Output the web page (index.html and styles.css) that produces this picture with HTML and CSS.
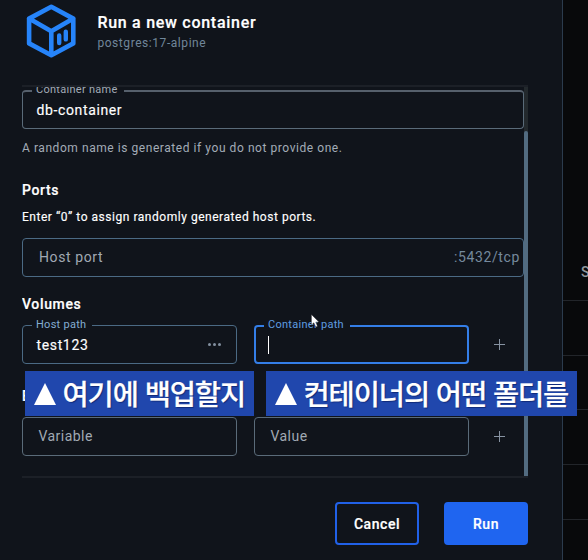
FILE: index.html
```html
<!DOCTYPE html>
<html lang="en">
<head>
<meta charset="utf-8">
<title>Run a new container</title>
<link rel="stylesheet" href="styles.css">
</head>
<body>
<div class="app">
  <main class="dialog">
    <header class="header">
      <svg class="logo" width="50" height="54" viewBox="0 0 50 54" fill="none" stroke="#2684fa" stroke-width="4.6" stroke-linejoin="round" stroke-linecap="round">
        <path d="M25.3 2.8 47.3 14.6V39.4L25.3 51.2 3.1 39.4V14.6ZM3.1 14.6 25.3 27.2 47.3 14.6M25.3 27.2V51.2"/>
        <path d="M33.2 31.5V39M39.8 27.8V35.4" stroke-width="4.4"/>
      </svg>
      <div class="heading">
        <h1 class="title">Run a new container</h1>
        <p class="image">postgres:17-alpine</p>
      </div>
    </header>
    <section class="scroll">
      <div class="form">
        <div class="field name-field">
          <div class="legend legend-clip"><span class="l-name">Container name</span></div>
          <span class="value v-name">db-container</span>
        </div>
        <p class="hint">A random name is generated if you do not provide one.</p>
        <h2 class="section">Ports</h2>
        <p class="note">Enter “0” to assign randomly generated host ports.</p>
        <div class="field port-field">
          <span class="placeholder p-port">Host port</span>
          <span class="suffix">:5432/tcp</span>
        </div>
        <h2 class="section volumes">Volumes</h2>
        <div class="row">
          <div class="field blue-line">
            <div class="legend"><span class="l-host">Host path</span></div>
            <span class="value v-test">test123</span>
            <span class="dots"><i></i><i></i><i></i></span>
          </div>
          <div class="field focused">
            <div class="legend"><span class="l-path">Container path</span></div>
            <span class="caret"></span>
          </div>
          <span class="plus"></span>
        </div>
        <h2 class="section env">Environment variables</h2>
        <div class="row env-row">
          <div class="field"><span class="placeholder">Variable</span></div>
          <div class="field"><span class="placeholder">Value</span></div>
          <span class="plus"></span>
        </div>
      </div>
      <div class="track"><div class="thumb"></div></div>
    </section>
    <footer class="footer">
      <button class="btn cancel">Cancel</button>
      <button class="btn run">Run</button>
    </footer>
  </main>
  <aside class="behind">
    <div class="cell head"><span>S</span></div>
    <div class="cell c55"></div>
    <div class="cell"></div>
    <div class="cell c55"></div>
    <div class="cell c55"></div>
  </aside>
  <div class="banner b1" lang="ko"><svg width="22" height="22"><path d="M11 0 22 22H0Z" fill="#fff"/></svg><span>여기에 백업할지</span></div>
  <div class="banner b2" lang="ko"><svg width="22" height="22"><path d="M11 0 22 22H0Z" fill="#fff"/></svg><span>컨테이너의 어떤 폴더를</span></div>
  <svg class="pointer" width="9" height="14" viewBox="0 0 9 14"><path d="M.4.4V11L2.8 8.8 4.8 13 6.5 12.2 4.8 8.1H8Z" fill="#fff" stroke="#11151c" stroke-width=".4"/></svg>
</div>
</body>
</html>
```
FILE: styles.css
```css
* { box-sizing: border-box; }
body { margin: 0; background: #08090b; font-family: Roboto, "Liberation Sans", sans-serif; color: #fff; }
h1, h2, p { margin: 0; }
.app { position: relative; display: flex; width: 588px; height: 560px; overflow: hidden; }
.dialog { width: 563px; background: #10141b; border-right: 1px solid #2b3b4d; padding-left: 22px; display: flex; flex-direction: column; }
.header { display: flex; height: 85px; flex: none; padding: 4px 0 0 4px; }
.logo { flex: none; }
.heading { padding: 9px 0 0 21.4px; }
.title { font-size: 16px; line-height: 20px; font-weight: 500; letter-spacing: .72px; white-space: nowrap; -webkit-text-stroke: .2px #fff; }
.image { font-size: 12px; line-height: 18px; color: #70869a; letter-spacing: .56px; padding-top: 1px; }
.scroll { display: flex; width: 506px; height: 393px; flex: none; overflow: hidden; border-top: 2px solid #1c2027; border-bottom: 2px solid #1c2027; }
.form { width: 502px; padding-top: 3px; }
.field { position: relative; display: flex; align-items: center; height: 39px; border: 1px solid #5a6b79; border-radius: 4px; padding: 0 14px; }
.name-field { border-top-width: 2px; border-top-color: #56606c; padding-bottom: 1px; }
.blue-line, .port-field { border-color: #4b6a84; }
.legend { position: absolute; left: 9px; top: -9px; height: 15px; padding: 0 6px 0 4px; background: #10141b; font-size: 11px; line-height: 15px; color: #84add2; white-space: nowrap; }
.legend-clip { color: #a2abb6; top: -5px; height: 10px; overflow: hidden; line-height: 6px; }
.l-name { letter-spacing: .28px; }
.l-host { letter-spacing: .27px; }
.l-path { letter-spacing: .28px; color: #5f9de0; }
.value { font-size: 14px; -webkit-text-stroke: .15px #fff; }
.name-field .value { margin-left: -.5px; }
.v-name { letter-spacing: .63px; }
.v-test { letter-spacing: .64px; margin-left: -.5px; }
.hint { font-size: 12px; line-height: 16px; margin-top: 11px; color: #a3acb7; letter-spacing: .56px; }
.section { font-size: 14px; line-height: 18px; font-weight: 500; letter-spacing: .65px; margin-top: 25px; -webkit-text-stroke: .2px #fff; }
.note { font-size: 12px; line-height: 16px; margin-top: 10px; letter-spacing: .53px; -webkit-text-stroke: .15px #fff; }
.port-field { margin-top: 13px; padding: 0 3px 1px 16px; justify-content: space-between; }
.placeholder { font-size: 14px; color: #a1a9b3; }
.p-port { letter-spacing: .6px; }
.suffix { font-size: 14px; color: #75899d; letter-spacing: .62px; }
.volumes { margin-top: 18px; }
.row { display: grid; grid-template-columns: 215px 215px 20px; column-gap: 17px; align-items: center; margin-top: 12px; }
.row .plus { margin-left: 7px; }
.focused { border: 2px solid #347ee7; padding-left: 12px; }
.focused .legend { left: 8px; top: -10px; }
.caret { width: 1px; height: 18px; background: #fff; }
.dots { display: flex; gap: 2px; margin-left: auto; margin-right: 1px; }
.dots i { width: 3px; height: 3px; border-radius: 50%; background: #8390a0; }
.plus { width: 11px; height: 11px; justify-self: center; background: linear-gradient(#8793a2, #8793a2) center / 11px 1px no-repeat, linear-gradient(#8793a2, #8793a2) center / 1px 11px no-repeat; }
.env { margin-top: 23px; white-space: nowrap; }
.env-row .placeholder { letter-spacing: .48px; padding-left: 1.4px; }
.env-row .field { padding-bottom: 1px; }
.track { width: 4px; background: #23292d; }
.thumb { margin-top: 44px; height: 345px; background: #526b80; border-radius: 2px 2px 0 0; }
.footer { display: flex; justify-content: flex-end; gap: 25px; padding: 24px 34px 0 0; }
.btn { width: 84px; height: 43px; border: 2px solid #2161e8; border-radius: 4px; background: transparent; color: #fff; font: 500 14px Roboto, sans-serif; letter-spacing: .55px; padding: 0; -webkit-text-stroke: .2px #fff; }
.run { background: #1f65f0; border-color: #1f65f0; }
.behind { width: 25px; overflow: hidden; }
.cell { height: 54px; border-bottom: 1px solid #22252a; }
.c55 { height: 55px; }
.cell.head { height: 301px; padding: 263px 0 0 18px; font-size: 14px; line-height: 18px; font-weight: 500; color: #92979d; }
.banner { position: absolute; top: 371px; height: 45px; background: #2047ad; display: flex; align-items: center; font-family: "Noto Sans CJK KR", sans-serif; font-weight: 500; font-size: 28.5px; line-height: 42px; white-space: nowrap; padding-left: 8.5px; }
.banner svg { flex: none; margin-top: 1px; margin-right: 7px; }
.b1 { left: 25px; width: 229px; }
.b2 { left: 266px; width: 311px; }
.banner span { letter-spacing: -1.12px; margin-top: -2px; -webkit-text-stroke: .2px #fff; text-shadow: 1px 1px 1px #102a78; }
.pointer { position: absolute; left: 311px; top: 314px; }
```
